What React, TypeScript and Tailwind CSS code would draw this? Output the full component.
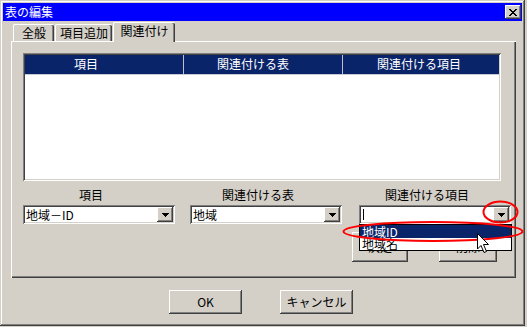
import React from "react";

const raised =
  "bg-[#d4d0c8] shadow-[inset_-1px_-1px_0_#404040,inset_1px_1px_0_#ffffff,inset_-2px_-2px_0_#808080,inset_2px_2px_0_#d4d0c8]";
const sunken =
  "shadow-[inset_1px_1px_0_#808080,inset_-1px_-1px_0_#ffffff,inset_2px_2px_0_#404040,inset_-2px_-2px_0_#d4d0c8]";

function DownArrow() {
  return (
    <svg width="7" height="4" viewBox="0 0 7 4" shapeRendering="crispEdges">
      <path d="M0 0h7v1H0z M1 1h5v1H1z M2 2h3v1H2z M3 3h1v1H3z" fill="#000" />
    </svg>
  );
}

function Combo({ text, caret, children }: { text?: string; caret?: boolean; children?: React.ReactNode }) {
  return (
    <div className={`relative w-[152px] h-[19px] p-[2px] bg-white flex ${sunken}`}>
      <div className="flex-1 flex items-center pl-[1px] leading-[14px] whitespace-nowrap">
        {caret ? <span className="w-[1px] h-[11px] bg-black ml-[1px]" /> : text}
      </div>
      <div className={`w-[16px] h-[15px] flex items-center justify-center ${raised}`}>
        <DownArrow />
      </div>
      {children}
    </div>
  );
}

function Btn({ label, w, h }: { label: string; w: string; h: string }) {
  return (
    <div className={`${w} ${h} flex items-center justify-center ${raised}`}>
      <span className="leading-[14px]">{label}</span>
    </div>
  );
}

export default function App() {
  return (
    <div className="relative w-[527px] h-[327px] bg-[#d4d0c8] overflow-hidden font-['Noto_Sans_CJK_JP','Noto_Sans',sans-serif] text-[12px] leading-[14px] text-black">
      <div className="w-[525px] h-[326px] p-[3px] shadow-[inset_-1px_-1px_0_#404040,inset_1px_1px_0_#d4d0c8,inset_-2px_-2px_0_#808080,inset_2px_2px_0_#ffffff]">
        {/* Title bar */}
        <div className="h-[18px] bg-[#0000ff] flex items-center justify-between pl-[2px]">
          <span className="text-white leading-[14px]">表の編集</span>
          <div className={`w-[16px] h-[14px] mr-[1px] flex items-center justify-center ${raised}`}>
            <svg width="8" height="7" viewBox="0 0 8 7" shapeRendering="crispEdges">
              <path
                d="M0 0h2v1h1v1h2V1h1V0h2v1H7v1H6v1H5v1h1v1h1v1h1v1H6V6H5V5H3v1H2v1H0V6h1V5h1V4h1V3H2V2H1V1H0z"
                fill="#000"
              />
            </svg>
          </div>
        </div>

        {/* Tabs */}
        <div className="relative z-10 flex items-end h-[20px] mt-[1px] pl-[10px]">
          <div className="w-[41px] h-[17px] mb-[1px] flex items-center justify-center border-l border-t border-white rounded-tl-[2px] rounded-tr-[2px] shadow-[inset_-1px_0_0_#404040,inset_-2px_0_0_#808080]">
            全般
          </div>
          <div className="ml-[1px] w-[57px] h-[17px] mb-[1px] flex items-center justify-center border-l border-t border-white rounded-tl-[2px] rounded-tr-[2px] shadow-[inset_-1px_0_0_#404040,inset_-2px_0_0_#808080]">
            項目追加
          </div>
          <div className="ml-[1px] w-[62px] h-[20px] pb-[3px] bg-[#d4d0c8] flex items-center justify-center border-l border-t border-white rounded-tl-[2px] rounded-tr-[2px] shadow-[inset_-1px_0_0_#404040,inset_-2px_0_0_#808080]">
            関連付け
          </div>
        </div>

        {/* Panel */}
        <div className="mt-[-1px] ml-[8px] w-[505px] h-[237px] pt-[12px] pl-[12px] shadow-[inset_1px_1px_0_#ffffff,inset_-1px_-1px_0_#404040,inset_-2px_-2px_0_#808080]">
          {/* List view */}
          <div className={`w-[478px] h-[128px] p-[2px] bg-white ${sunken}`}>
            <div className="h-[20px] bg-[#0a246a] text-white flex border-b border-[#c8c8d8]">
              <div className="w-[158px] pl-[49px] flex items-center pb-[1px]">項目</div>
              <div className="w-[1px] bg-[#c0c0c8]" />
              <div className="w-[158px] pl-[33px] flex items-center pb-[1px]">関連付ける表</div>
              <div className="w-[1px] bg-[#c0c0c8]" />
              <div className="flex-1 pl-[34px] flex items-center pb-[1px]">関連付ける項目</div>
            </div>
          </div>

          {/* Field rows */}
          <div className="flex mt-[7px]">
            <div className="flex flex-col">
              <div className="w-[136px] h-[14px] text-center">項目</div>
              <div className="mt-[3px]">
                <Combo text="地域－ID" />
              </div>
            </div>
            <div className="flex flex-col ml-[15px]">
              <div className="w-[136px] h-[14px] text-center">関連付ける表</div>
              <div className="mt-[3px]">
                <Combo text="地域" />
              </div>
            </div>
            <div className="flex flex-col ml-[17px]">
              <div className="w-[136px] h-[14px] text-center">関連付ける項目</div>
              <div className="relative z-20 mt-[3px]">
                <Combo caret>
                  <div className="absolute left-0 top-[19px] w-[153px] h-[27px] border border-black bg-white flex flex-col">
                    <div className="h-[13px] bg-[#0a246a] text-white pl-[2px] flex items-center leading-[13px]">
                      地域ID
                    </div>
                    <div className="h-[12px] pl-[2px] flex items-center leading-[12px]">地域名</div>
                  </div>
                </Combo>
              </div>
            </div>
          </div>

          {/* Buttons under dropdown */}
          <div className="flex mt-[8px] ml-[329px]">
            <Btn label="決定" w="w-[56px]" h="h-[30px]" />
            <div className="ml-[31px]">
              <Btn label="削除" w="w-[58px]" h="h-[30px]" />
            </div>
          </div>
        </div>

        {/* OK / Cancel */}
        <div className="flex mt-[12px] ml-[166px]">
          <Btn label="OK" w="w-[73px]" h="h-[24px]" />
          <div className="ml-[38px]">
            <Btn label="キャンセル" w="w-[73px]" h="h-[24px]" />
          </div>
        </div>
      </div>

      {/* Red annotations and mouse cursor */}
      <svg className="absolute left-0 top-0 z-30 pointer-events-none" width="527" height="327" viewBox="0 0 527 327">
        <ellipse cx="500.5" cy="212" rx="17" ry="10.5" fill="none" stroke="#ff0000" strokeWidth="2" />
        <ellipse cx="433" cy="231.5" rx="89.5" ry="9.5" fill="none" stroke="#ff0000" strokeWidth="2" />
        <path
          d="M477.5 233.5 L477.5 249 L481 245.5 L484 252.5 L486.5 251.5 L483.5 244.5 L488.5 244.5 Z"
          fill="#ffffff"
          stroke="#000000"
          strokeWidth="1"
        />
      </svg>
    </div>
  );
}
